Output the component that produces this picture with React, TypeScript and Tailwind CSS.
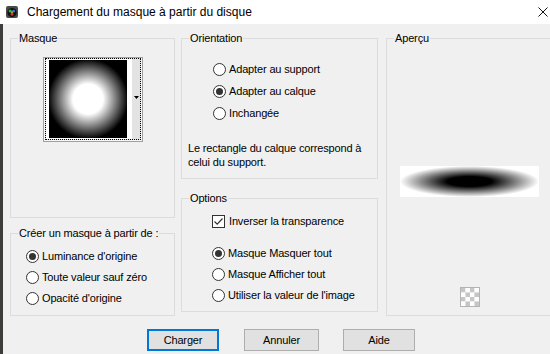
import React from "react";

function Group({
  label,
  className,
  children,
}: {
  label: string;
  className: string;
  children?: React.ReactNode;
}) {
  return (
    <div className={`relative shrink-0 border border-[#dcdcdc] ${className}`}>
      <span className="absolute left-[7px] top-[-8px] bg-[#f0f0f0] px-[1px] leading-[14px]">
        {label}
      </span>
      {children}
    </div>
  );
}

function Radio({ label, checked, h = "h-[21px]" }: { label: string; checked?: boolean; h?: string }) {
  return (
    <div className={`flex items-center gap-[3px] ${h}`}>
      <span className="flex h-[13px] w-[13px] items-center justify-center rounded-full border border-[#333333] bg-white">
        {checked && <span className="h-[7px] w-[7px] rounded-full bg-[#333333]" />}
      </span>
      <span>{label}</span>
    </div>
  );
}

function Checker() {
  const cells = [];
  for (let r = 0; r < 4; r++) {
    for (let c = 0; c < 4; c++) {
      cells.push(
        <rect
          key={`${r}-${c}`}
          x={1 + c * 4.5}
          y={1 + r * 4.5}
          width={4.5}
          height={4.5}
          fill={(r + c) % 2 === 0 ? "#c6c6c6" : "#ffffff"}
        />,
      );
    }
  }
  return (
    <svg width="20" height="20" viewBox="0 0 20 20">
      {cells}
      <rect x="0.5" y="0.5" width="19" height="19" fill="none" stroke="#b4b4b4" />
    </svg>
  );
}

function Button({ label, focused, w }: { label: string; focused?: boolean; w: string }) {
  return (
    <div
      className={`flex h-[22px] items-center justify-center bg-[#e1e1e1] ${w} ${
        focused ? "border-2 border-[#0078d7]" : "border border-[#adadad]"
      }`}
    >
      {label}
    </div>
  );
}

export default function App() {
  return (
    <div className="flex h-[354px] w-[550px] flex-col overflow-hidden bg-[#f0f0f0] font-['Liberation_Sans',Arial,sans-serif] text-[11px] tracking-[-0.15px] text-black">
      {/* title bar */}
      <div className="flex h-[24px] shrink-0 items-center bg-white">
        <svg className="ml-[6px]" width="12" height="12" viewBox="0 0 12 12">
          <rect x="0" y="0" width="12" height="12" rx="2" fill="#4a4a4a" />
          <circle cx="6" cy="6.5" r="4.6" fill="#111" />
          <circle cx="4.2" cy="5" r="1.6" fill="#2fb34a" />
          <circle cx="7.6" cy="5.2" r="1.4" fill="#2d7fd6" />
          <circle cx="6" cy="8.3" r="1.4" fill="#d9363e" />
          <circle cx="6" cy="6.3" r="0.9" fill="#e6c229" />
        </svg>
        <span className="ml-[9px] text-[12px] tracking-normal">Chargement du masque à partir du disque</span>
        <svg className="ml-auto mr-[2px]" width="10" height="10" viewBox="0 0 10 10">
          <path d="M0.5 0.5 L9.5 9.5 M9.5 0.5 L0.5 9.5" stroke="#111" strokeWidth="1" />
        </svg>
      </div>

      <div className="flex flex-1">
        <div className="w-[3px] shrink-0 bg-[#3d3d3b]" />
        <div className="flex flex-1 flex-col pl-[7px] pt-[14px]">
          <div className="flex">
            {/* left column */}
            <div className="flex w-[165px] shrink-0 flex-col">
              <Group label="Masque" className="h-[180px] pl-[32px] pt-[18px]">
                <div className="h-[85px] w-[100px] border border-[#a0a0a0] bg-[#f7f7f7] px-[1px] pb-[1px]">
                  <div className="flex h-full border border-dotted border-black bg-[#e3e3e3]">
                    <div className="flex bg-white pl-[3px] pt-[1px] pr-[5px]">
                      <div className="h-[78px] w-[78px] bg-[radial-gradient(circle_at_center,#ffffff_0,#ffffff_15px,#000000_40px)]" />
                    </div>
                    <div className="flex flex-1 items-start justify-end pr-[1px] pt-[37px]">
                      <svg width="5" height="3" viewBox="0 0 5 3">
                        <path d="M0 0 H5 L2.5 3 Z" fill="#000" />
                      </svg>
                    </div>
                  </div>
                </div>
              </Group>
              <Group label="Créer un masque à partir de :" className="mt-[15px] h-[83px] pl-[15px] pt-[12px]">
                <Radio label="Luminance d'origine" checked />
                <Radio label="Toute valeur sauf zéro" />
                <Radio label="Opacité d'origine" />
              </Group>
            </div>

            {/* middle column */}
            <div className="ml-[6px] flex w-[197px] shrink-0 flex-col">
              <Group label="Orientation" className="h-[141px] pl-[6px] pt-[19px]">
                <div className="pl-[25px]">
                  <Radio label="Adapter au support" h="h-[22px]" />
                  <Radio label="Adapter au calque" checked h="h-[22px]" />
                  <Radio label="Inchangée" h="h-[22px]" />
                </div>
                <p className="mt-[17px] leading-[14px]">
                  Le rectangle du calque correspond à
                  <br />
                  celui du support.
                </p>
              </Group>
              <Group label="Options" className="mt-[19px] h-[114px] pl-[30px] pt-[12px]">
                <div className="flex h-[21px] items-center gap-[4px]">
                  <span className="flex h-[13px] w-[13px] items-center justify-center border border-[#333333] bg-white">
                    <svg width="11" height="11" viewBox="0 0 11 11">
                      <path d="M1.5 5.5 L4.2 8.2 L9.5 2.5" fill="none" stroke="#333" strokeWidth="1.2" />
                    </svg>
                  </span>
                  <span>Inverser la transparence</span>
                </div>
                <div className="mt-[11px]">
                  <Radio label="Masque Masquer tout" checked />
                  <Radio label="Masque Afficher tout" />
                  <Radio label="Utiliser la valeur de l'image" />
                </div>
              </Group>
            </div>

            {/* right column */}
            <Group label="Aperçu" className="ml-[8px] flex h-[278px] w-[167px] flex-col items-center pt-[127px]">
              <div className="h-[31px] w-[139px] bg-white bg-[radial-gradient(closest-side,#000000_0,#000000_32%,#ffffff_100%)]" />
              <div className="mt-[90px]">
                <Checker />
              </div>
            </Group>
          </div>

          <div className="mt-[13px] flex pl-[137px]">
            <Button label="Charger" focused w="w-[72px]" />
            <Button label="Annuler" w="ml-[25px] w-[75px]" />
            <Button label="Aide" w="ml-[24px] w-[72px]" />
          </div>
        </div>
      </div>
    </div>
  );
}
